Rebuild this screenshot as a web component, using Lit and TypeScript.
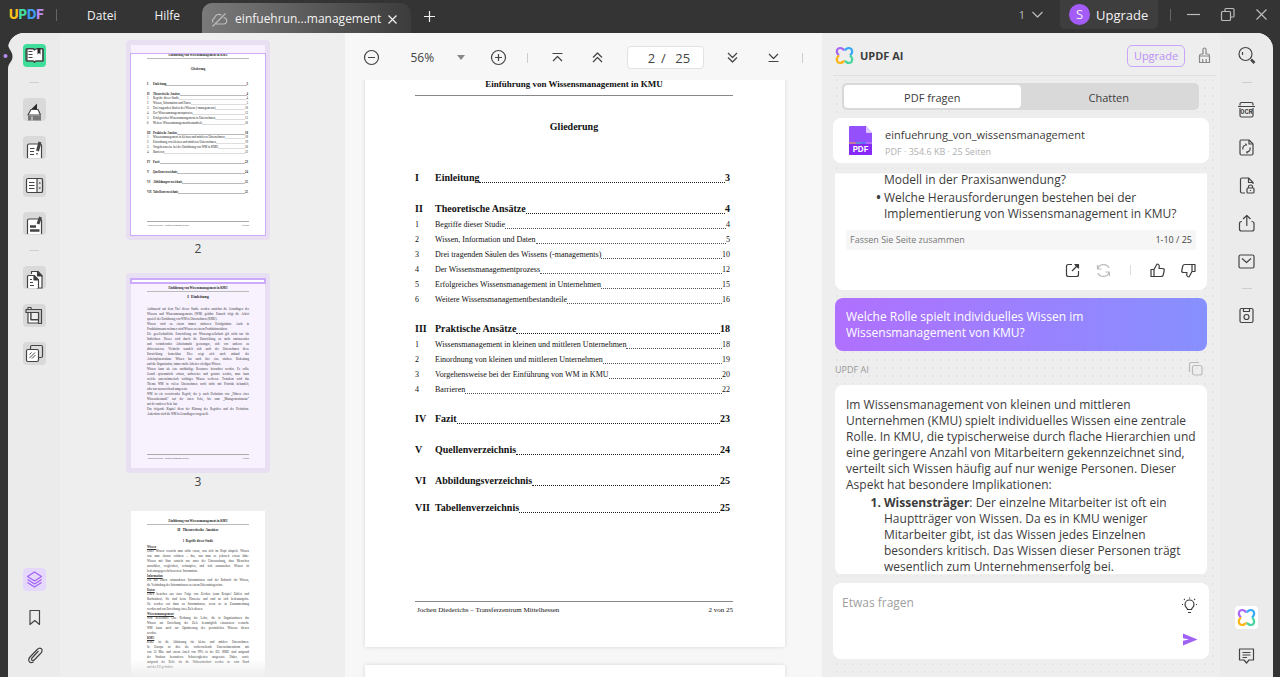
import { LitElement, html, css, svg, nothing } from "lit";
import { customElement, property } from "lit/decorators.js";
import { classMap } from "lit/directives/class-map.js";

/* ---------- icons ---------- */

const ICONS: Record<string, unknown> = {
  reader: svg`<path fill="#fff" d="M4 5h6.500l1 1 1-1H20v12h-7l-1.500 1-1.500-1H4z"/><path d="M4 4.500h6l1.500 1.200M13.500 4.500H19q1 0 1 1V16q0 1-1 1h-6l-1.500 1.300L10 17H4q-1 0-1-1V5.500q0-1 1-1"/><path d="M5.500 7.500H9.500M5.500 10.500H9.500M5.500 13.500H9.500"/><path fill="#2b2b2b" stroke="none" d="M14.500 4h3v6.500L16 9l-1.500 1.500z"/>`,
  marker: svg`<path fill="#2b2b2b" stroke="none" d="M8 11.500 14 5.500v6z"/><path fill="#fff" d="M8 11.500h7l2.500 5.500H5z"/><path fill="#777" stroke="none" d="M5 18h13v4.500H5z"/><path stroke="#ddd" d="M9 18.500V22.500"/>`,
  edit: svg`<path fill="#fff" d="M4.500 22V9.500q0-1.500 1.500-1.500H17q1.500 0 1.500 1.500V22"/><path d="M7 12.500h4.500M7 15.500h4M7 18.500h4"/><path stroke-width="3" d="M17 6 14.500 15"/><path stroke-width="1.500" d="M14 17v1.500"/>`,
  form: svg`<rect x="3.500" y="4.500" width="16" height="14" rx="1.500" fill="#fff"/><path fill="#e4e4e4" d="M14 4.500V18.500h4q1.500 0 1.500-1.500V6q0-1.500-1.500-1.500z"/><path d="M6 8.500h5.500M6 11.500h5.500M6 14.500h5.500"/><path fill="#333" stroke="none" d="m15.500 9.500 1.300-1.500 1.200 1.500zM15.500 13.500l1.300 1.500 1.200-1.500z"/>`,
  redact: svg`<path fill="#fff" d="M4.500 22V8.500q0-1.500 1.500-1.500H17q1.500 0 1.500 1.500V22"/><path stroke-width="2.500" d="M7 14.500h6M7 18.500h9.500"/><path stroke-width="3" d="M17.500 5 15 12"/>`,
  pages: svg`<path fill="#fff" d="M8.500 8V5.500H15l4 4.500v12h-5"/><path fill="#2b2b2b" d="M14.500 5.500V10H19z"/><path fill="#fff" d="M4.500 22V10.500q0-1 1-1H11l4.500 4.500v8"/><path fill="#2b2b2b" d="M11 9.500V14h4.500z"/><path d="M7 13.500h2M7 16.500h3M7 19.500h4"/>`,
  crop: svg`<path fill="#fff" d="M5 3.500h3v12.500h9.500V19H5z"/><path fill="#ccc" d="M3 5.500h15.500V19.500h-3V8.500H3z"/><path fill="#eee" d="M8 8.500h7.500V15.500H8z"/>`,
  watermark: svg`<rect x="7.500" y="3.500" width="12" height="12" rx="1.500" fill="#ddd"/><rect x="3.500" y="7.500" width="12" height="12" rx="1.500" fill="#fff"/><path stroke-width="1" d="m6.500 12.500 2-2M6.500 16 12 10.500M9 16.500l3.500-3.500"/>`,
  layers: svg`<g stroke="#a061f5"><path d="m11.500 4 7 4.500-7 4.500-7-4.500z"/><path d="m4.500 11.500 7 4.500 7-4.500M4.500 14.500l7 4.500 7-4.500"/></g>`,
  bookmark: svg`<path d="M7 4.500h9.500v14l-4.700-4-4.800 4z"/>`,
  clip: svg`<path d="m15.500 7-6.500 7c-1.500 1.800.6 3.600 2.200 2L18 9c3-3.500-.8-6.500-3.800-3.500L7 13c-3 3.600 0 7 3.500 5"/>`,
  search: svg`<circle cx="10.500" cy="10" r="6.500"/><path d="M7.500 8v3"/><path stroke-width="2.500" d="m16 15.500 3.500 3.500"/>`,
  ocr: svg`<path d="M5 7.500V6q0-1.500 1.500-1.500h10Q18 4.500 18 6v1.500M3 8.500h17M5 10v7.500Q5 19 6.500 19h10q1.500 0 1.500-1.500V10"/>`,
  convert: svg`<path d="M6 4h8l4 4v9.500q0 1.500-1.500 1.500h-10Q5 19 5 17.500V5.500Q5 4 6 4z"/><path d="M14 4v4h4"/><path d="M8 13.500c-.8-2.500.8-4.500 3.500-4.500l-1-1.300M15 11.500c.8 2.500-.8 4.500-3.500 4.500l1 1.300"/>`,
  protect: svg`<path d="M10 19H7q-1.500 0-1.500-1.500v-12Q5.500 4 7 4h6.500L18 8.500V10"/><path d="M13.500 4v4.500H18"/><rect x="12" y="14" width="7" height="5" rx="1"/><path d="M13.500 14v-1.500q0-1.500 2-1.500t2 1.500V14M15.500 16v1"/>`,
  share: svg`<path d="M7 9.500q-2.500 0-2.500 2V17q0 2 2 2h10.500q2 0 2-2v-5.500q0-2-2.500-2"/><path d="M11.800 14V3.500M8 7l3.800-3.500L15.500 7"/>`,
  mail: svg`<rect x="4" y="5" width="15" height="13" rx="1.500"/><path d="m7 8.500 4.500 4 4.500-4"/>`,
  save: svg`<rect x="5" y="4.500" width="13" height="14" rx="1.500"/><path d="M8.500 4.500v3h6v-3"/><circle cx="11.500" cy="13" r="2.500"/>`,
  comment: svg`<path d="M4.500 5h14v11H14l-2.500 3L9 16H4.500z"/><path d="M7.500 8.500h8M7.500 11h8M7.500 13.500H12"/>`,
  clover: svg`<g stroke-width="2.200"><path stroke="#a868f5" d="M6 11.500C2.500 8.500 3.500 4 7.300 4c2 0 2.700 1.800 4.200 1.800"/><path stroke="#38a8f8" d="M11.500 5.800c1.500 0 2.200-1.800 4.200-1.800 3.800 0 4.800 4.500 1.300 7.500"/><path stroke="#45d6a0" d="M17 11.500c3.500 3 2.500 7.500-1.300 7.500-2 0-2.700-1.800-4.200-1.800"/><path stroke="#fdb515" d="M11.500 17.200c-1.500 0-2.200 1.800-4.200 1.800-3.800 0-4.800-4.500-1.300-7.500"/></g>`,
  brush: svg`<path d="M10 10V5.500q0-1.500 1.500-1.500T13 5.500V10h2q1.500 0 1.500 2h-10q0-2 1.500-2zM6.500 12v6.500h10V12M9.700 15v3M13.200 15v3"/>`,
  minusCircle: svg`<circle cx="11.500" cy="11.500" r="7"/><path d="M8 11.500h7"/>`,
  plusCircle: svg`<circle cx="11.500" cy="11.500" r="7"/><path d="M8 11.500h7M11.500 8v7"/>`,
  first: svg`<path d="M6.500 7.500h10M7 15l4.500-4.500L16 15"/>`,
  prev: svg`<path d="M7 11.500 11.500 7l4.500 4.500M7 16l4.500-4.500L16 16"/>`,
  next: svg`<path d="m7 7 4.500 4.500L16 7M7 11.500l4.500 4.500 4.500-4.500"/>`,
  last: svg`<path d="m7 8 4.500 4.500L16 8M6.500 15.500h10"/>`,
  open: svg`<path d="M11 5.500H7.500Q5.500 5.500 5.500 7.500v8q0 2 2 2h8q2 0 2-2V12"/><path d="m11 12 6-6"/><path fill="#333" d="M14 5.500h3.500V9z"/>`,
  refresh: svg`<path d="M6 10c.8-5.500 9-6 11-1M17 13c-.8 5.500-9 6-11 1M5.500 6v4h4M17.500 17v-4h-4"/>`,
  up: svg`<path d="M5 10.500h3v7H5zM8 10.500l3-5.500c2.500 0 2.500 2 2 4.500h3.500q2 0 1.700 2l-1 4.500q-.4 1.500-2 1.500H8"/>`,
  down: svg`<path d="M18 12.500h-3v-7h3zM15 12.500 12 18c-2.500 0-2.500-2-2-4.500H6.500q-2 0-1.700-2L5.800 7q.4-1.500 2-1.500H15"/>`,
  copy: svg`<rect x="8.500" y="7.500" width="9.500" height="9.500" rx="2"/><path d="M5.500 14V6.500q0-2 2-2H15"/>`,
  bulb: svg`<path d="M9.500 15.500c0-1.500-2.500-2-2.500-5a4.500 4.500 0 0 1 9 0c0 3-2.500 3.500-2.500 5zM10 18.500h3M11.500 3.500V4.500M6 5l.8.800M17 5l-.8.800M4 10.500h1M18 10.500h1"/>`,
  send: svg`<path fill="#a061f5" stroke="none" d="M5 5.500 19.500 11.500 5 17.500v-4.800l6-1.200-6-1.200z"/>`,
  cloudOff: svg`<path d="M8 16h8q3.500-.8 2.500-4.500-1-2-3-1.500M13.500 7Q8 5 6.500 10 3.500 11.500 5 14.500M4.500 18.500l13-13"/>`,
  close: svg`<path d="m7.500 7.500 8 8M15.500 7.500l-8 8"/>`,
  closeBig: svg`<path d="m6.500 6.500 10 10M16.500 6.500l-10 10"/>`,
  plus: svg`<path d="M6 11.500h11M11.500 6v11"/>`,
  chevron: svg`<path d="m6.500 9 5 5 5-5"/>`,
  minimize: svg`<path d="M5 11.500h13"/>`,
  restore: svg`<rect x="5.500" y="8.500" width="9" height="9" rx="1"/><path d="M9 8V6.500Q9 5.500 10 5.500h7q1 0 1 1v6.500q0 1-1 1h-2"/>`,
  pdf: svg`<path fill="#9350fb" stroke="none" d="M1.500 0H17l6 7v21q0 1-1 1H1q-1 0-1-1V1q0-1 1.500-1z"/><path fill="#ddc8ff" stroke="none" d="M17 0v6q0 1 1 1h5z"/><path fill="#8628f6" stroke="none" d="M0 18h23v10q0 1-1 1H1q-1 0-1-1z"/><path stroke="#f5a53c" d="M0 17h7"/><path stroke="#37c9a0" d="M7 17h5"/><path stroke="#3a8df0" d="M12 17h5"/><path stroke="#d08cf5" d="M17 17h6"/>`,
};

const icon = (name: string) => svg`<svg class="icon" viewBox="0 0 23 23" width="23" height="23" fill="none" stroke="currentColor" stroke-width="1.200" stroke-linejoin="round" aria-hidden="true">${ICONS[name]}</svg>`;

const iconCss = css`
  * { box-sizing: border-box; }
  button { font: inherit; color: inherit; background: none; border: 0; padding: 0; margin: 0; cursor: pointer; }
  .icon { display: block; }
`;

/* ---------- document data ---------- */

interface Entry { no: string; title: string; page: number; subs?: [string, number][]; }

const TOC: Entry[] = [
  { no: "I", title: "Einleitung", page: 3 },
  {
    no: "II", title: "Theoretische Ansätze", page: 4, subs: [
      ["Begriffe dieser Studie", 4],
      ["Wissen, Information und Daten", 5],
      ["Drei tragenden Säulen des Wissens (-managements)", 10],
      ["Der Wissensmanagementprozess", 12],
      ["Erfolgreiches Wissensmanagement in Unternehmen", 15],
      ["Weitere Wissensmanagementbestandteile", 16],
    ],
  },
  {
    no: "III", title: "Praktische Ansätze", page: 18, subs: [
      ["Wissensmanagement in kleinen und mittleren Unternehmen", 18],
      ["Einordnung von kleinen und mittleren Unternehmen", 19],
      ["Vorgehensweise bei der Einführung von WM in KMU", 20],
      ["Barrieren", 22],
    ],
  },
  { no: "IV", title: "Fazit", page: 23 },
  { no: "V", title: "Quellenverzeichnis", page: 24 },
  { no: "VI", title: "Abbildungsverzeichnis", page: 25 },
  { no: "VII", title: "Tabellenverzeichnis", page: 25 },
];

const INTRO: string[][] = [
  ["Aufbauend auf dem Titel dieser Studie werden zunächst die Grundlagen des",
    "Wissens und Wissensmanagements (WM) geführt. Danach folgt die Arbeit",
    "speziell der Einführung von WM in Unternehmen (KMU)."],
  ["Wissen wird zu einem immer stärkeren Erfolgsfaktor. Auch in",
    "Produktionsunternehmen wird Wissen zu einem Produktionsfaktor."],
  ["Die gesellschaftliche Entwicklung zur Wissensgesellschaft gilt nicht nur für",
    "Individuen. Dieses wird durch die Entwicklung zu mehr umfassenden",
    "und verändernden Arbeitsmarkt gezwungen, sich von anderen zu",
    "differenzieren. Vielmehr wandelt sich auch der Unternehmen diese",
    "Entwicklung bemerkbar. Dies zeigt sich auch anhand der",
    "Arbeitsplatzstruktur. Wissen hat auch hier eine stärkere Bedeutung",
    "und die Organisation, immer mehr Arbeiter erledigen Wissen."],
  ["Wissen kann als eine nachhaltige Ressource betrachtet werden. Es sollte",
    "Grund systematisch erfasst, aufbereitet und genutzt werden, man kann",
    "welche unternehmerisch wichtiges Wissen verlieren. Trotzdem wird das",
    "Thema WM in vielen Unternehmen noch nicht mit Priorität behandelt,",
    "oder nur unzureichend umgesetzt."],
  ["WM ist ein verwirrender Begriff, der je nach Definition von „Führen eines",
    "Wissensbestands“ auf der einen Seite, bis zum „Managementansatz“",
    "auf der anderen Seite hat."],
  ["Das folgende Kapitel dient der Klärung des Begriffes und der Definition.",
    "Außerdem wird die WM in Grundlagen vorgestellt."],
];

const TERMS: { head: string; lines: string[] }[] = [
  { head: "Wissen", lines: [
    "Unter Wissen versteht man nicht etwas, was sich im Kopf abspielt. Wissen",
    "was man ebenso erfahren – das, was man so jederzeit erneut hätte.",
    "Wissen mit Sinn entsteht nur unter der Untersuchung, dass Menschen",
    "auswählen, vergleichen, verknüpfen, und sich austauschen. Wissen ist",
    "bedeutungsgerecht bewertete Information."] },
  { head: "Information", lines: [
    "Die aus Daten entstandenen Informationen sind der Rohstoff für Wissen,",
    "die Verbindung der Informationen zu einem Erkenntnisgewinn."] },
  { head: "Daten", lines: [
    "Daten bestehen aus einer Folge von Zeichen (zum Beispiel Zahlen und",
    "Buchstaben). Sie sind keine Hinweise und sind an sich bedeutungslos.",
    "Sie werden erst dann zu Informationen, wenn sie in Zusammenhang",
    "werden und zur Erreichung eines Ziels dienen."] },
  { head: "Wissensmanagement", lines: [
    "WM bezeichnet eine Richtung der Lehre, die in Organisationen das",
    "Wissen zur Erreichung der Ziele bestmöglich einzusetzen versucht.",
    "WM kann auch zur Optimierung des persönlichen Wissens dienen",
    "werden."] },
  { head: "KMU", lines: [
    "KMU ist die Abkürzung für kleine und mittlere Unternehmen.",
    "In Europa ist dies die vorherrschende Unternehmensform mit",
    "von 23 Mio. und einem Anteil von 99% in der EU. KMU sind aufgrund",
    "der Struktur besonderen Schwierigkeiten ausgesetzt. Daher, sowie",
    "aufgrund der Rolle für die Volkswirtschaft werden sie vom Bund",
    "und der EU gefördert."] },
];

/* ---------- document page ---------- */

@customElement("doc-page")
export class DocPage extends LitElement {
  @property({ type: Number }) number = 2;
  @property({ type: Boolean }) mini = false;

  static styles = css`
    * { box-sizing: border-box; }
    :host { display: block; background: #fff; color: #111; font-family: "Liberation Serif", serif; text-align: left; }
    .sheet { display: flex; flex-direction: column; height: 595px; padding: 27px 52px 0 50px; }
    .running { font-size: 9px; line-height: 10px; font-weight: bold; text-align: center; height: 17px; border-bottom: 1px solid #888; white-space: nowrap; }
    h2 { margin: 24px 0 35px; font-size: 10px; line-height: 14px; text-align: center; }
    .toc { display: flex; flex-direction: column; gap: 13px; padding-right: 3px; }
    .section:last-child { margin-top: -4px; }
    .row { display: grid; grid-template-columns: 20px auto 1fr auto; align-items: end; height: 15px; font-size: 8px; line-height: 15px; white-space: nowrap; }
    .head { height: 18px; font-size: 10px; line-height: 18px; font-weight: bold; }
    .subs { margin-top: -1px; }
    .leader { border-bottom: 1px dotted #555; margin-bottom: 3px; }
    .head .leader { border-bottom-color: #222; margin-bottom: 4px; }
    .foot { display: flex; justify-content: space-between; margin-top: auto; margin-bottom: 31px; border-top: 1px solid #888; padding: 3px 0 0 2px; font-size: 7px; line-height: 11px; }

    .mini { height: 190px; padding: 8px 16px 0; color: #222; }
    .mini .running { font-size: 3px; line-height: 5px; height: 6px; border-bottom-color: #bbb; }
    .mini h2 { font-size: 3px; line-height: 6px; margin: 7px 0 9px; }
    .mini .toc { gap: 4px; padding-right: 1px; }
    .mini .section:last-child { margin-top: 0; }
    .mini .row { grid-template-columns: 6px auto 1fr auto; height: 5px; line-height: 5px; font-size: 3px; }
    .mini .head { height: 6px; line-height: 6px; }
    .mini .leader { border-bottom: 1px solid #ddd; margin-bottom: 1px; }
    .mini .head .leader { border-bottom-color: #bbb; margin-bottom: 1px; }
    .mini .foot { font-size: 2px; line-height: 4px; padding: 1px 0 0 1px; margin-bottom: 8px; border-top-color: #aaa; }
    .prose { font-size: 3px; line-height: 5px; color: #333; }
    .prose p { margin: 0; }
    .line { display: block; text-align: justify; text-align-last: justify; white-space: nowrap; }
    .line:last-child { text-align-last: left; }
    .term { display: block; line-height: 4px; font-weight: bold; text-decoration: underline; }
    .mini h2.title, .mini h2.chapter { font-size: 4px; }
    .mini h2.title { margin: 2px 0 4px; }
    .mini h2.chapter { margin: 2px 0 7px; }
    .mini h3 { margin: 2px 0 1px; font-size: 3px; line-height: 5px; text-align: center; }
  `;

  private row(no: string, title: string, page: number, head = false) {
    return html`<div class=${classMap({ row: true, head })}><span>${no}</span><span>${title}</span><span class="leader"></span><span>${page}</span></div>`;
  }

  private contents() {
    return html`<h2>Gliederung</h2>
      <div class="toc">${TOC.map((e) => html`<div class="section">
        ${this.row(e.no, e.title, e.page, true)}
        ${e.subs ? html`<div class="subs">${e.subs.map(([t, p], i) => this.row(String(i + 1), t, p))}</div>` : nothing}
      </div>`)}</div>`;
  }

  private body() {
    if (this.number === 2) return this.contents();
    if (this.number === 3) {
      return html`<h2 class="chapter">I&ensp;Einleitung</h2>
        <div class="prose">${INTRO.map((p) => html`<p>${p.map((l) => html`<span class="line">${l}</span>`)}</p>`)}</div>`;
    }
    return html`<h2 class="title">II&ensp;Theoretische Ansätze</h2><h3>1&ensp;Begriffe dieser Studie</h3>
      <div class="prose">${TERMS.map((t) => html`<p><span class="term">${t.head}</span>${t.lines.map((l) => html`<span class="line">${l}</span>`)}</p>`)}</div>`;
  }

  render() {
    return html`<div class=${classMap({ sheet: true, mini: this.mini })}>
      <div class="running">Einführung von Wissensmanagement in KMU</div>
      ${this.body()}
      <div class="foot"><span>Jochen Diederichs – Transferzentrum Mittelhessen</span><span>${this.number} von 25</span></div>
    </div>`;
  }
}

/* ---------- title bar ---------- */

@customElement("title-bar")
export class TitleBar extends LitElement {
  static styles = [iconCss, css`
    :host { display: flex; align-items: center; height: 33px; color: #f2f2f2; font-size: 12px; line-height: 16px; padding-right: 7px; }
    .logo { width: 56px; padding-left: 9px; height: 22px; font: 800 13px/16px Inter, sans-serif; }
    .u { color: #ffc21a; } .p { color: #45dca0; } .d { color: #3f9df0; } .f { color: #b98cf8; }
    .sep { width: 1px; height: 12px; background: #666; margin-bottom: 4px; }
    .menu { flex: none; margin-left: 30px; margin-bottom: 2px; }
    .menu + .menu { margin-left: 38px; }
    .tab { flex: none; align-self: flex-end; display: flex; align-items: center; height: 30px; width: 209px; margin-left: 22px; padding: 2px 6px 0; border-radius: 10px 10px 0 0; background: linear-gradient(90deg, #7a7a7a, #3c3c3c); }
    .tab .name { white-space: nowrap; padding-left: 4px; }
    .dim { color: #bbb; }
    .add { margin-left: 7px; }
    .right { margin-left: auto; display: flex; align-items: center; height: 33px; padding-bottom: 4px; }
    .count { display: flex; align-items: center; gap: 1px; color: #bbb; font-size: 11px; margin-right: 11px; }
    .account { display: flex; align-items: center; gap: 6px; height: 29px; width: 98px; padding: 0 9px; background: #3e3e3e; border-radius: 0 0 5px 5px; font-size: 13px; }
    .avatar { width: 21px; height: 21px; border-radius: 50%; background: #a35cf8; text-align: center; line-height: 21px; font-size: 13px; }
    .win { margin-left: 11px; }
    .right .sep { margin: 0 0 0 12px; }
  `];
  render() {
    return html`
      <div class="logo"><span class="u">U</span><span class="p">P</span><span class="d">D</span><span class="f">F</span></div>
      <span class="sep"></span>
      <button class="menu">Datei</button><button class="menu">Hilfe</button>
      <div class="tab"><span class="dim">${icon("cloudOff")}</span><span class="name">einfuehrun...management</span><button aria-label="Tab schließen">${icon("close")}</button></div>
      <button class="add" aria-label="Neuer Tab">${icon("plus")}</button>
      <div class="right">
        <button class="count">1 ${icon("chevron")}</button>
        <button class="account"><span class="avatar">S</span>Upgrade</button>
        <span class="sep"></span>
        <button class="win dim" aria-label="Minimieren">${icon("minimize")}</button>
        <button class="win dim" aria-label="Wiederherstellen">${icon("restore")}</button>
        <button class="win dim" aria-label="Schließen">${icon("closeBig")}</button>
      </div>`;
  }
}

/* ---------- side rails ---------- */

@customElement("tool-rail")
export class ToolRail extends LitElement {
  @property() side: "left" | "right" = "left";
  static styles = [iconCss, css`
    :host { display: flex; flex-direction: column; justify-content: space-between; align-items: center; padding: 11px 0 10px; background: #ebebeb; color: #444; }
    .group { display: flex; flex-direction: column; align-items: center; gap: 15px; }
    .divider { width: 10px; height: 1px; background: #cfcfcf; }
    .tool { position: relative; border-radius: 4px; overflow: hidden; }
    .boxed { background: #d9d9d9; }
    .active { background: #3fdf9b; }
    .lilac { background: #e6d8fd; }
    .white { background: #fff; }
    .ocr { position: absolute; left: 0; right: 0; top: 10px; text-align: center; font: bold 7px/8px "Liberation Mono", monospace; }
  `];
  private tool(name: string, label: string, look = "") {
    return html`<button class="tool ${look}" aria-label=${label}>${icon(name)}${name === "ocr" ? html`<span class="ocr">OCR</span>` : nothing}</button>`;
  }
  render() {
    const line = html`<span class="divider"></span>`;
    return this.side === "left"
      ? html`<div class="group">
          ${this.tool("reader", "Leser", "active")}${line}
          ${this.tool("marker", "Kommentar", "boxed")}${this.tool("edit", "PDF bearbeiten", "boxed")}
          ${this.tool("form", "Formular", "boxed")}${this.tool("redact", "Schwärzen", "boxed")}${line}
          ${this.tool("pages", "Seiten", "boxed")}${this.tool("crop", "Zuschneiden", "boxed")}${this.tool("watermark", "Wasserzeichen", "boxed")}
        </div>
        <div class="group">${this.tool("layers", "Miniaturansicht", "lilac")}${this.tool("bookmark", "Lesezeichen")}${this.tool("clip", "Anhang")}</div>`
      : html`<div class="group">
          ${this.tool("search", "Suchen")}${line}
          ${this.tool("ocr", "Texterkennung")}${this.tool("convert", "Konvertieren")}${this.tool("protect", "Schützen")}
          ${this.tool("share", "Teilen")}${this.tool("mail", "E-Mail")}${line}${this.tool("save", "Speichern")}
        </div>
        <div class="group">${this.tool("clover", "UPDF AI", "white")}${this.tool("comment", "Kommentare")}</div>`;
  }
}

/* ---------- thumbnails ---------- */

@customElement("thumb-list")
export class ThumbList extends LitElement {
  static styles = [iconCss, css`
    :host { display: flex; flex-direction: column; align-items: center; gap: 15px; position: relative; overflow: hidden; background: #eee; padding-top: 7px; padding-right: 9px; }
    .item { flex: none; text-align: center; font-size: 12px; line-height: 18px; color: #444; }
    .halo { position: relative; width: 144px; height: 200px; padding: 5px; border-radius: 4px; }
    .lit { background: #e8e0f2; }
    .lit doc-page { background: #f8f2ff; }
    .view { position: absolute; left: 4px; right: 4px; border: 1px solid #cbabfa; }
    .view.main { top: 13px; bottom: 4px; }
    .view.next { top: 5px; height: 6px; border-width: 2px; background: #fff; }
    .first doc-page { background: linear-gradient(#f8f2ff 8px, #fff 8px); }
    .fade { position: absolute; left: 0; right: 0; bottom: 0; height: 18px; background: linear-gradient(#eee0, #eee); }
  `];
  render() {
    return html`
      <div class="item first"><div class="halo lit"><doc-page mini number="2"></doc-page><span class="view main"></span></div>2</div>
      <div class="item"><div class="halo lit"><doc-page mini number="3"></doc-page><span class="view next"></span></div>3</div>
      <div class="item"><div class="halo"><doc-page mini number="4"></doc-page></div>4</div>
      <div class="fade"></div>`;
  }
}

/* ---------- viewer ---------- */

@customElement("pdf-viewer")
export class PdfViewer extends LitElement {
  static styles = [iconCss, css`
    :host { display: flex; flex-direction: column; min-width: 0; background: #f7f7f7; color: #444; font-size: 12px; }
    .bar { flex: none; display: flex; align-items: center; height: 47px; padding: 2px 19px 0 15px; justify-content: space-between; }
    .zoom { display: flex; align-items: center; margin: 0 4px 0 10px; }
    select { appearance: none; border: 0; background: none; color: inherit; font: inherit; width: 47px; padding: 0; }
    .caret { width: 0; border: 4px solid transparent; border-top: 5px solid #888; border-bottom: 0; }
    .sep { width: 1px; height: 10px; background: #ccc; }
    .pager { display: flex; align-items: center; justify-content: center; gap: 6px; width: 77px; height: 23px; padding-left: 6px; background: #fff; border: 1px solid #e2e2e2; border-radius: 4px; font-size: 13px; }
    .pager input { width: 9px; border: 0; padding: 0; background: none; font: inherit; color: inherit; text-align: right; }
    .scroll { flex: 1; min-height: 0; overflow: hidden; padding: 0 37px 0 20px; }
    .page { display: block; margin-top: -28px; box-shadow: 0 0 4px #0002; }
    .page + .page { margin-top: 18px; }
  `];
  render() {
    return html`
      <div class="bar">
        <button aria-label="Verkleinern">${icon("minusCircle")}</button>
        <label class="zoom"><select aria-label="Zoom"><option>56%</option></select><span class="caret"></span></label>
        <button aria-label="Vergrößern">${icon("plusCircle")}</button>
        <span class="sep"></span>
        <button aria-label="Erste Seite">${icon("first")}</button>
        <button aria-label="Vorherige Seite">${icon("prev")}</button>
        <label class="pager"><input aria-label="Seite" .value=${"2"} /><span>/</span><span>&nbsp;25</span></label>
        <button aria-label="Nächste Seite">${icon("next")}</button>
        <button aria-label="Letzte Seite">${icon("last")}</button>
        <span class="sep"></span>
      </div>
      <div class="scroll">
        <doc-page class="page" number="2"></doc-page>
        <doc-page class="page" number="3"></doc-page>
      </div>`;
  }
}

/* ---------- AI panel ---------- */

@customElement("ai-panel")
export class AiPanel extends LitElement {
  static styles = [iconCss, css`
    :host { display: flex; flex-direction: column; background: #eee; color: #3c3c3c; font-size: 12px; line-height: 16px; padding: 0 4px 0 11px; }
    .top { flex: none; display: flex; align-items: center; height: 43px; border-bottom: 1px solid #e0e0e0; padding-top: 3px; }
    .top h1 { margin: 0 auto 0 4px; font-size: 11px; line-height: 16px; font-weight: 700; }
    .upgrade { width: 58px; height: 22px; border: 1px solid #c9a4fa; border-radius: 5px; color: #bb90f7; font-size: 11px; margin-right: 8px; }
    .brush { color: #888; }
    .dots { flex: 1; min-height: 0; display: flex; flex-direction: column; padding: 7px 7px 18px 0; background: radial-gradient(circle, #e6e6e6 1px, transparent 1px) 0 0 / 8px 8px; }
    .tabs { flex: none; display: flex; margin: 0 10px 0 9px; padding: 2px; height: 27px; background: #d9d9d9; border-radius: 5px; font-size: 11px; }
    .tabs button { flex: 1; border-radius: 4px; padding-top: 2px; }
    .tabs .on { background: #fff; }
    .file { flex: none; display: flex; gap: 13px; height: 45px; margin-top: 8px; padding: 8px 16px; background: #fff; border-radius: 8px; }
    .doc { position: relative; width: 23px; height: 29px; }
    .doc svg { display: block; }
    .doc span { position: absolute; left: 0; right: 0; bottom: 1px; text-align: center; color: #fff; font: bold 8px/10px Inter, sans-serif; }
    .meta { font-size: 9px; color: #b0b0b0; line-height: 18px; }
    .name { font-size: 11px; line-height: 17px; }
    .log { flex: 1; min-height: 0; overflow: hidden; margin: 9px 2px 0; }
    .msg { background: #fff; border-radius: 8px; padding: 12px 11px 0; }
    .cut { border-radius: 0 0 8px 8px; padding-top: 0; padding-bottom: 8px; box-shadow: inset 0 3px 3px -3px #0003; }
    .msg p { margin: 0; }
    ul, ol { margin: 0; padding: 0 0 0 38px; }
    li { margin-top: 2px; }
    ul li { list-style: "• "; }
    ul li:first-child { margin-top: 0; list-style: none; }
    ul li::marker { font-weight: 700; }
    ol li::marker { font-weight: 700; }
    .sum { display: flex; justify-content: space-between; align-items: center; height: 20px; margin-top: 8px; padding: 0 4px; background: #f6f6f6; border-radius: 3px; font-size: 9px; color: #777; }
    .sum strong { font-weight: 500; color: #444; }
    .actions { display: flex; align-items: center; justify-content: flex-end; gap: 8px; margin-top: 8px; height: 24px; margin-right: -4px; }
    .faint { color: #bbb; }
    .sep { width: 1px; height: 10px; background: #ddd; margin: 0 7px; }
    .mine { margin-top: 8px; padding: 11px 11px 10px; border-radius: 8px; color: #fff; background: linear-gradient(90deg, #b070ff, #8790ff); }
    .who { display: flex; align-items: center; justify-content: space-between; height: 34px; font-size: 9px; color: #999; padding-top: 3px; }
    .who button { color: #bbb; }
    .ask { flex: none; display: flex; margin-top: 9px; height: 76px; padding: 11px 8px 8px; background: #fff; border-radius: 8px; }
    textarea { flex: 1; border: 0; resize: none; outline: 0; padding: 1px; font: inherit; background: none; color: inherit; }
    textarea::placeholder { color: #a0a0a0; opacity: 1; }
    .side { display: flex; flex-direction: column; justify-content: space-between; }
  `];
  render() {
    return html`
      <div class="top">${icon("clover")}<h1>UPDF AI</h1><button class="upgrade">Upgrade</button><button class="brush" aria-label="Leeren">${icon("brush")}</button></div>
      <div class="dots">
        <div class="tabs"><button class="on">PDF fragen</button><button>Chatten</button></div>
        <div class="file">
          <div class="doc"><svg viewBox="0 0 23 29" width="23" height="29" fill="none">${ICONS.pdf}</svg><span>PDF</span></div>
          <div><div class="name">einfuehrung_von_wissensmanagement</div><div class="meta">PDF · 354.6 KB · 25 Seiten</div></div>
        </div>
        <div class="log">
          <div class="msg cut">
            <ul><li>Modell in der Praxisanwendung?</li><li>Welche Herausforderungen bestehen bei der Implementierung von Wissensmanagement in KMU?</li></ul>
            <div class="sum"><span>Fassen Sie Seite zusammen</span><strong>1-10 / 25</strong></div>
            <div class="actions">
              <button aria-label="Öffnen">${icon("open")}</button><button class="faint" aria-label="Neu generieren">${icon("refresh")}</button>
              <span class="sep"></span>
              <button aria-label="Gut">${icon("up")}</button><button aria-label="Schlecht">${icon("down")}</button>
            </div>
          </div>
          <div class="mine">Welche Rolle spielt individuelles Wissen im<br />Wissensmanagement von KMU?</div>
          <div class="who"><span>UPDF AI</span><button aria-label="Kopieren">${icon("copy")}</button></div>
          <div class="msg">
            <p>Im Wissensmanagement von kleinen und mittleren Unternehmen (KMU) spielt individuelles Wissen eine zentrale Rolle. In KMU, die typischerweise durch flache Hierarchien und eine geringere Anzahl von Mitarbeitern gekennzeichnet sind, verteilt sich Wissen häufig auf nur wenige Personen. Dieser Aspekt hat besondere Implikationen:</p>
            <ol><li><b>Wissensträger</b>: Der einzelne Mitarbeiter ist oft ein Hauptträger von Wissen. Da es in KMU weniger Mitarbeiter gibt, ist das Wissen jedes Einzelnen besonders kritisch. Das Wissen dieser Personen trägt wesentlich zum Unternehmenserfolg bei.</li></ol>
          </div>
        </div>
        <div class="ask"><textarea aria-label="Etwas fragen" placeholder="Etwas fragen"></textarea>
          <div class="side"><button aria-label="Vorschläge">${icon("bulb")}</button><button aria-label="Senden">${icon("send")}</button></div>
        </div>
      </div>`;
  }
}

/* ---------- application ---------- */

@customElement("app-root")
export class AppRoot extends LitElement {
  static styles = css`
    :host { display: flex; flex-direction: column; height: 100vh; overflow: hidden; background: #343434; font-family: "Open Sans", "Noto Sans", sans-serif; }
    .frame { flex: 1; min-height: 0; display: grid; grid-template-columns: 52px 285px minmax(0, 1fr) 398px 53px; grid-template-rows: minmax(0, 1fr); margin: 0 7px 0 8px; border-radius: 16px 16px 0 0; overflow: hidden; background: #ebebeb; position: relative; }
    .notch { position: absolute; left: 0; top: 44px; }
  `;
  render() {
    return html`
      <title-bar></title-bar>
      <div class="frame">
        <tool-rail side="left"></tool-rail>
        <thumb-list></thumb-list>
        <pdf-viewer></pdf-viewer>
        <ai-panel></ai-panel>
        <tool-rail side="right"></tool-rail>
      </div>
      <svg class="notch" width="14" height="25" viewBox="0 0 14 25" aria-hidden="true"><path fill="#343434" d="M7 0h1c0 5 4.500 7 4.500 12.500S8 19 8 25H7z"/><circle cx="5.500" cy="12" r="2" fill="#b98cf8"/></svg>`;
  }
}
